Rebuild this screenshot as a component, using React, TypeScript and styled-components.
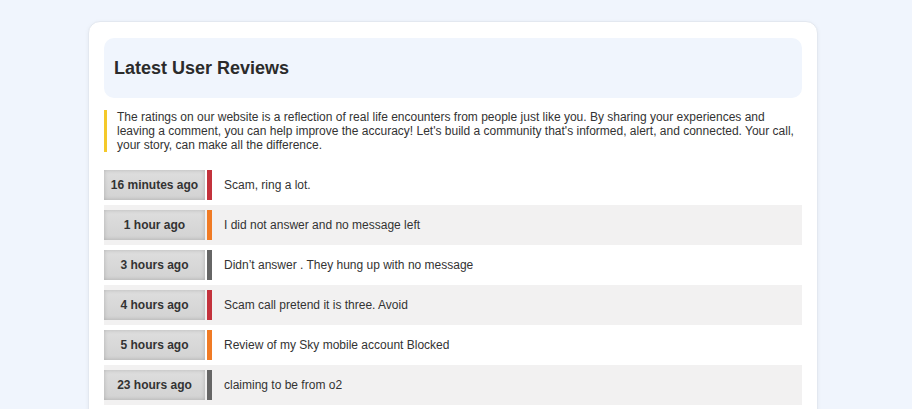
import React from "react";
import styled, { createGlobalStyle } from "styled-components";

const Global = createGlobalStyle`
  html, body { margin: 0; padding: 0; background: #f0f5fd; }
  body { font-family: "Liberation Sans", Arial, sans-serif; color: #333; }
`;

const Card = styled.div`
  margin: 21px 0 0 88px;
  width: 698px;
  padding: 16px 15px 16px 15px;
  background: #fff;
  border: 1px solid #e3e8f0;
  border-radius: 12px;
  box-shadow: 0 1px 4px rgba(0, 0, 0, 0.05);
`;

const Header = styled.div`
  background: #f0f5fd;
  border-radius: 10px;
  height: 60px;
  display: flex;
  align-items: center;
  padding: 0 10px;
`;

const Title = styled.h2`
  margin: 0;
  font-size: 18px;
  font-weight: bold;
  color: #2b2b2b;
`;

const Intro = styled.p`
  margin: 12px 0 0 0;
  border-left: 3px solid #f4c92a;
  padding: 0 4px 0 10px;
  font-size: 12px;
  line-height: 14px;
  color: #333;
`;

const List = styled.div`
  margin-top: 13px;
  display: flex;
  flex-direction: column;
`;

const Row = styled.div<{ $striped: boolean }>`
  display: flex;
  align-items: center;
  height: 40px;
  padding: 0;
  background: ${(p) => (p.$striped ? "#f2f1f1" : "#fff")};
`;

const Badge = styled.div`
  width: 101px;
  height: 30px;
  display: flex;
  align-items: center;
  justify-content: center;
  font-size: 12px;
  font-weight: bold;
  color: #333;
  background: linear-gradient(#dedede, #d2d2d2);
  box-shadow: inset 0 0 4px rgba(0, 0, 0, 0.18);
`;

const Bar = styled.div<{ $color: string }>`
  width: 5px;
  height: 30px;
  margin-left: 2px;
  background: ${(p) => p.$color};
`;

const Text = styled.div`
  margin-left: 12px;
  font-size: 12px;
  color: #333;
`;

const COLORS = { red: "#c3323c", orange: "#f07b25", gray: "#666666" };

const reviews = [
  { time: "16 minutes ago", text: "Scam, ring a lot.", c: COLORS.red },
  { time: "1 hour ago", text: "I did not answer and no message left", c: COLORS.orange },
  { time: "3 hours ago", text: "Didn’t answer . They hung up with no message", c: COLORS.gray },
  { time: "4 hours ago", text: "Scam call pretend it is three. Avoid", c: COLORS.red },
  { time: "5 hours ago", text: "Review of my Sky mobile account Blocked", c: COLORS.orange },
  { time: "23 hours ago", text: "claiming to be from o2", c: COLORS.gray },
];

export default function App() {
  return (
    <>
      <Global />
      <Card>
        <Header>
          <Title>Latest User Reviews</Title>
        </Header>
        <Intro>
          The ratings on our website is a reflection of real life encounters from people just like you. By sharing your experiences and leaving a comment, you can help improve the accuracy! Let's build a community that's informed, alert, and connected. Your call, your story, can make all the difference.
        </Intro>
        <List>
          {reviews.map((r, i) => (
            <Row key={i} $striped={i % 2 === 1}>
              <Badge>{r.time}</Badge>
              <Bar $color={r.c} />
              <Text>{r.text}</Text>
            </Row>
          ))}
        </List>
      </Card>
    </>
  );
}
